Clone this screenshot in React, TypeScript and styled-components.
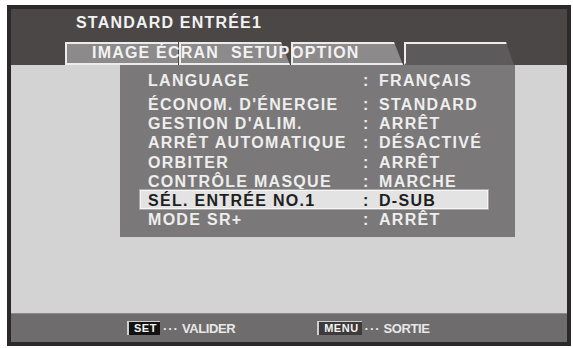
import React from 'react'
import styled, { createGlobalStyle } from 'styled-components'

const GlobalStyle = createGlobalStyle`
  body {
    margin: 0;
    background: #ffffff;
    font-family: 'Liberation Sans', Arial, sans-serif;
  }
`

interface MenuItem {
  label: string
  value: string
  selected?: boolean
}

const items: MenuItem[] = [
  { label: 'LANGUAGE', value: 'FRANÇAIS' },
  { label: "ÉCONOM. D'ÉNERGIE", value: 'STANDARD' },
  { label: "GESTION D'ALIM.", value: 'ARRÊT' },
  { label: 'ARRÊT AUTOMATIQUE', value: 'DÉSACTIVÉ' },
  { label: 'ORBITER', value: 'ARRÊT' },
  { label: 'CONTRÔLE MASQUE', value: 'MARCHE' },
  { label: 'SÉL. ENTRÉE NO.1', value: 'D-SUB', selected: true },
  { label: 'MODE SR+', value: 'ARRÊT' },
]

const App: React.FC = () => {
  return (
    <>
      <GlobalStyle />
      <Screen>
        <Header>
          <Title>STANDARD ENTRÉE1</Title>
          <TabRow>
            <Tab $width={113} $slant={0}>
              <TabLabel $pad={27}>IMAGE ÉCRAN</TabLabel>
            </Tab>
            <Tab $width={111} $slant={9}>
              <TabLabel $pad={52}>SETUP</TabLabel>
            </Tab>
            <Tab $width={112} $slant={9}>
              <TabLabel $pad={0}>OPTION</TabLabel>
            </Tab>
            <Tab $width={110} $slant={8} $dark />
          </TabRow>
        </Header>
        <Body>
          <Panel>
            {items.map((item, i) => (
              <Row key={i} $selected={item.selected} $first={i === 0}>
                <Label>{item.label}</Label>
                <Colon>:</Colon>
                <Value>{item.value}</Value>
              </Row>
            ))}
          </Panel>
        </Body>
        <Footer>
          <Hint>
            <KeyBox $dark>SET</KeyBox>
            <Dots>···</Dots>
            <HintText>VALIDER</HintText>
          </Hint>
          <Hint>
            <KeyBox>MENU</KeyBox>
            <Dots>···</Dots>
            <HintText>SORTIE</HintText>
          </Hint>
        </Footer>
      </Screen>
    </>
  )
}

const Screen = styled.div`
  margin: 5px 0 0 7px;
  width: 564px;
  height: 341px;
  box-sizing: border-box;
  border: 4px solid #2b2929;
  display: flex;
  flex-direction: column;
  background: #d3d3d3;
`

const Header = styled.div`
  height: 56px;
  background: #4b4747;
  display: flex;
  flex-direction: column;
`

const Title = styled.div`
  padding: 5px 0 0 65px;
  color: #f2f2f2;
  font-size: 16px;
  line-height: 18px;
  font-weight: 700;
  letter-spacing: 1.2px;
`

const TabRow = styled.div`
  margin-top: auto;
  display: flex;
  gap: 1px;
  padding-left: 54px;
  height: 23px;
`

const Tab = styled.div<{ $width: number; $slant: number; $dark?: boolean }>`
  position: relative;
  width: ${(p) => p.$width}px;
  box-sizing: border-box;
  padding-top: 2px;
  white-space: nowrap;

  &::before {
    content: '';
    position: absolute;
    inset: 0;
    box-sizing: border-box;
    background: ${(p) => (p.$dark ? '#5c5a5a' : '#8c8a8a')};
    border-top: 2px solid #ececec;
    border-left: 2px solid #ececec;
    border-bottom: 2px solid ${(p) => (p.$dark ? '#5c5a5a' : '#ececec')};
    clip-path: polygon(0 0, calc(100% - ${(p) => p.$slant}px) 0, 100% 100%, 0 100%);
  }
`

const TabLabel = styled.span<{ $pad: number }>`
  position: relative;
  z-index: 1;
  display: block;
  padding-left: ${(p) => p.$pad}px;
  color: #f2f2f2;
  font-size: 16px;
  line-height: 18px;
  font-weight: 700;
  letter-spacing: 1.2px;
`

const Body = styled.div`
  flex: 1;
  display: flex;
  padding-left: 109px;
  background: #d3d3d3;
`

const Panel = styled.div`
  width: 395px;
  height: 172px;
  box-sizing: border-box;
  padding-top: 5px;
  background: #7a7878;
  display: flex;
  flex-direction: column;
`

const Row = styled.div<{ $selected?: boolean; $first?: boolean }>`
  display: grid;
  grid-template-columns: 215px 15px 1fr;
  margin: 0 27px 0 20px;
  padding-left: 8px;
  height: ${(p) => (p.$first ? 24 : 19.2)}px;
  box-sizing: border-box;
  align-items: start;
  font-size: 16px;
  line-height: 19px;
  font-weight: 700;
  letter-spacing: 1.3px;
  color: ${(p) => (p.$selected ? '#1e1e1e' : '#eeeeee')};
  background: ${(p) => (p.$selected ? '#e3e3e3' : 'transparent')};
  outline: ${(p) => (p.$selected ? '1px solid #a9a9a9' : 'none')};
  border: 1px solid ${(p) => (p.$selected ? '#f6f6f6' : 'transparent')};
`

const Label = styled.span`
  margin-left: -1px;
  white-space: nowrap;
`

const Colon = styled.span`
  margin-left: -1px;
`

const Value = styled.span`
  white-space: nowrap;
`

const Footer = styled.div`
  height: 29px;
  box-sizing: border-box;
  border-top: 1px solid #8c8a8a;
  background: #6e6c6c;
  display: flex;
  align-items: center;
  gap: 82px;
  padding-left: 116px;
`

const Hint = styled.div`
  display: flex;
  align-items: center;
  gap: 3px;
`

const KeyBox = styled.span<{ $dark?: boolean }>`
  display: inline-block;
  padding: 0 3px 0 5px;
  height: 13px;
  line-height: 13px;
  font-size: 11px;
  font-weight: 700;
  color: #f4f4f4;
  background: ${(p) => (p.$dark ? '#121212' : '#3c3a3a')};
  border-top: 1px solid #cfcfcf;
  border-left: 2px solid #cfcfcf;
  letter-spacing: 0.5px;
`

const Dots = styled.span`
  color: #e6e6e6;
  font-size: 13px;
  font-weight: 700;
  letter-spacing: 1px;
`

const HintText = styled.span`
  color: #e8e8e8;
  font-size: 13px;
  font-weight: 700;
  letter-spacing: -0.4px;
`

export default App
